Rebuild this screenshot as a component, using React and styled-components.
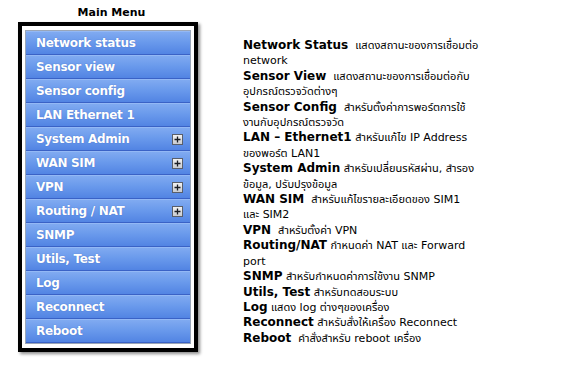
import React from "react";
import styled, { createGlobalStyle } from "styled-components";

const Global = createGlobalStyle`
  html, body { margin: 0; padding: 0; background: #ffffff; }
  body { font-family: "DejaVu Sans", "Noto Sans Thai", "Noto Sans", sans-serif; color: #000; }
`;

const Page = styled.div`
  display: flex;
  align-items: flex-start;
  width: 561px;
  height: 372px;
  box-sizing: border-box;
  padding: 6px 0 0 18px;
`;

const MenuColumn = styled.div`
  display: flex;
  flex-direction: column;
  align-items: center;
  width: 180px;
`;

const Title = styled.div`
  font-family: "DejaVu Sans", sans-serif;
  font-weight: bold;
  font-size: 11px;
  line-height: 14px;
  margin: 0 0 2px 7px;
`;

const Frame = styled.div`
  width: 180px;
  box-sizing: border-box;
  border: 4px solid #000;
  background: #fff;
  padding: 4px 3px;
  box-shadow: 2px 2px 3px rgba(0, 0, 0, 0.45);
`;

const MenuList = styled.div`
  display: flex;
  flex-direction: column;
  border: 1px solid #9aa6b8;
  background: #4d7fe0;
`;

const Item = styled.div`
  display: flex;
  align-items: center;
  justify-content: space-between;
  height: 24px;
  box-sizing: border-box;
  padding: 0 7px 0 10px;
  background: linear-gradient(#80aaf1 0%, #6a9aec 45%, #5284e3 100%);
  border-top: 1px solid #93b8f5;
  border-bottom: 1px solid #3a62c6;
  color: #fff;
  font-family: "DejaVu Sans", sans-serif;
  font-weight: bold;
  font-size: 12px;
  letter-spacing: -0.3px;
  text-shadow: 0 0 1px rgba(40, 70, 160, 0.6);
`;

const Plus = styled.span`
  display: flex;
  align-items: center;
  justify-content: center;
  width: 11px;
  height: 11px;
  box-sizing: border-box;
  border: 1px solid #5a5f6a;
  background: linear-gradient(#f2f2f2, #c9cbd0);
`;

const Desc = styled.div`
  margin: 32px 0 0 45px;
  font-size: 11px;
  line-height: 15.4px;
  width: 290px;
`;

const Line = styled.div`
  white-space: nowrap;
`;

const B = styled.b`
  font-family: "DejaVu Sans", sans-serif;
  font-weight: bold;
  font-size: 12px;
`;

const PlusIcon = () => (
  <Plus>
    <svg width="7" height="7" viewBox="0 0 7 7">
      <path d="M3.5 0.5v6M0.5 3.5h6" stroke="#1a1d24" strokeWidth="1.3" />
    </svg>
  </Plus>
);

const items = [
  ["Network status", false],
  ["Sensor view", false],
  ["Sensor config", false],
  ["LAN Ethernet 1", false],
  ["System Admin", true],
  ["WAN SIM", true],
  ["VPN", true],
  ["Routing / NAT", true],
  ["SNMP", false],
  ["Utils, Test", false],
  ["Log", false],
  ["Reconnect", false],
  ["Reboot", false],
];

const lines = [
  [<B key="b">Network Status</B>, "  แสดงสถานะของการเชื่อมต่อ"],
  [null, "network"],
  [<B key="b">Sensor View</B>, "  แสดงสถานะของการเชื่อมต่อกับ"],
  [null, "อุปกรณ์ตรวจวัดต่างๆ"],
  [<B key="b">Sensor Config</B>, "  สำหรับตั้งค่าการพอร์ตการใช้"],
  [null, "งานกับอุปกรณ์ตรวจวัด"],
  [<B key="b">LAN – Ethernet1</B>, " สำหรับแก้ไข IP Address"],
  [null, "ของพอร์ต LAN1"],
  [<B key="b">System Admin</B>, " สำหรับเปลี่ยนรหัสผ่าน, สำรอง"],
  [null, "ข้อมูล, ปรับปรุงข้อมูล"],
  [<B key="b">WAN SIM</B>, "  สำหรับแก้ไขรายละเอียดของ SIM1"],
  [null, "และ SIM2"],
  [<B key="b">VPN</B>, "  สำหรับตั้งค่า VPN"],
  [<B key="b">Routing/NAT</B>, " กำหนดค่า NAT และ Forward"],
  [null, "port"],
  [<B key="b">SNMP</B>, " สำหรับกำหนดค่าการใช้งาน SNMP"],
  [<B key="b">Utils, Test</B>, " สำหรับทดสอบระบบ"],
  [<B key="b">Log</B>, " แสดง log ต่างๆของเครื่อง"],
  [<B key="b">Reconnect</B>, " สำหรับสั่งให้เครื่อง Reconnect"],
  [<B key="b">Reboot</B>, "  คำสั่งสำหรับ reboot เครื่อง"],
];

export default function App() {
  return (
    <>
      <Global />
      <Page>
        <MenuColumn>
          <Title>Main Menu</Title>
          <Frame>
            <MenuList>
              {items.map(([label, sub]) => (
                <Item key={label}>
                  <span>{label}</span>
                  {sub && <PlusIcon />}
                </Item>
              ))}
            </MenuList>
          </Frame>
        </MenuColumn>
        <Desc>
          {lines.map(([b, t], i) => (
            <Line key={i}>
              {b}
              <span style={{ whiteSpace: "pre" }}>{t}</span>
            </Line>
          ))}
        </Desc>
      </Page>
    </>
  );
}
